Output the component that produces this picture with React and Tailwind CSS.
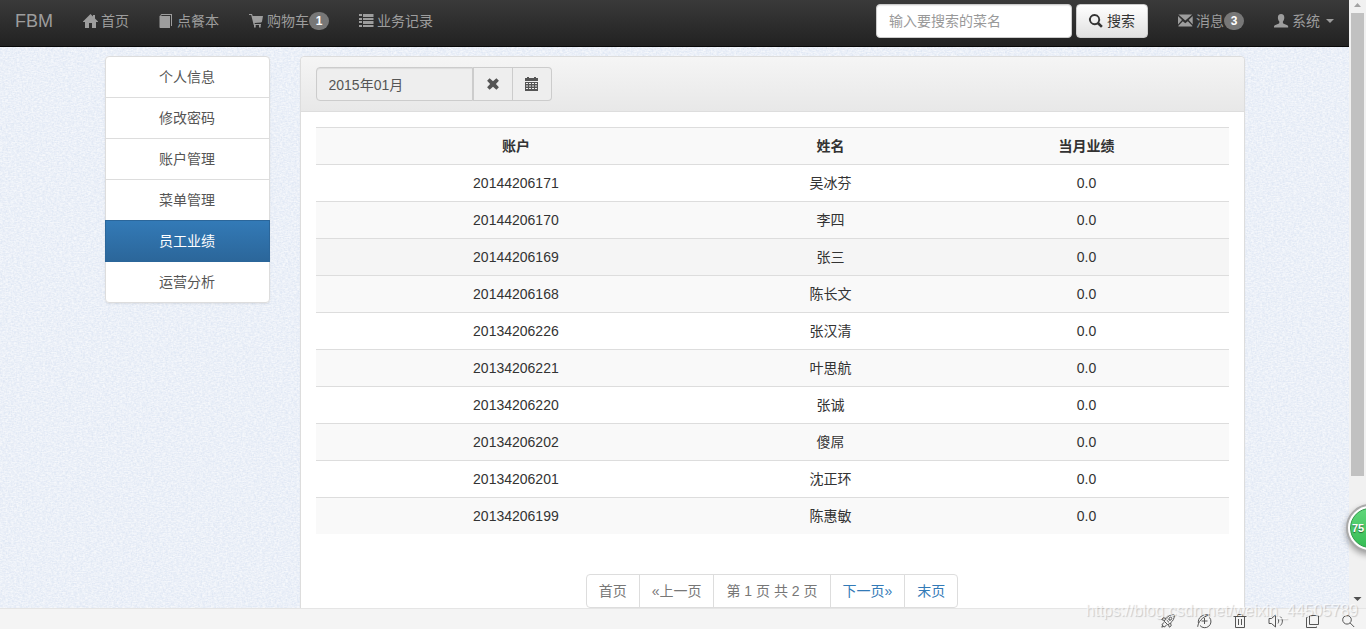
import React from 'react';

function Glyph({ children }) {
  return (
    <svg viewBox="0 0 14 14" aria-hidden="true" className="h-3.5 w-3.5 shrink-0 overflow-visible fill-current">
      {children}
    </svg>
  );
}

const HomeIcon = () => (
  <Glyph>
    <path d="M7.5 0 10 2.5V1h2v3.5l3 3V8h-2v6H9V9H6v5H2V8H0v-.5Z" />
  </Glyph>
);

const BookIcon = () => (
  <Glyph>
    <path d="M1 2h10v12H1.2a.7.7 0 0 1-.7-.7V2.400Z" />
    <path d="M.7 1.700 2.400 0H13v12h-1V1H3L2 1.800Z" />
  </Glyph>
);

const CartIcon = () => (
  <Glyph>
    <path d="M0 0h3l.7 2H14l-1 5.500c-.1.500-.4.800-.9.900L5.500 9l.4 1H12v1H4.700L2.200 1H0Z" />
    <path d="M5 11h1.700v2.400H5ZM10 11h1.700v2.400H10Z" />
  </Glyph>
);

const ListIcon = () => (
  <Glyph>
    <path d="M0 0h3v2H0ZM0 4h3v2H0ZM0 7h3v2H0ZM0 11h3v2H0ZM4 0h10.500v3H4ZM4 4h10.500v2H4ZM4 7h10.500v3H4ZM4 11h10.500v2H4Z" />
  </Glyph>
);

const SearchIcon = () => (
  <Glyph>
    <path
      fillRule="evenodd"
      d="M5.600 0a5.600 5.600 0 0 1 4.700 8.600l3.500 3.400-1.800 1.800-3.500-3.400A5.600 5.600 0 1 1 5.600 0Zm0 1.900a3.700 3.700 0 1 0 0 7.400 3.700 3.700 0 0 0 0-7.400Z"
    />
  </Glyph>
);

const EnvelopeIcon = () => (
  <Glyph>
    <path d="M.4.500h13.800L7.300 6.400ZM0 2l4 4-4 4.600ZM14.700 2v8.600l-4-4.600ZM4.800 7.200l2.500 2.100 2.500-2.100 4.500 4.600v.7H.4v-.7Z" />
  </Glyph>
);

const UserIcon = () => (
  <Glyph>
    <path d="M7.100 0c2.200 0 3.200 1.500 3.200 3.400 0 1.600-.5 3.100-1.400 4.100v1.200c0 .5.3.8.8 1l3.100 1.200c.9.4 1.400 1 1.400 1.900v.6H0v-.6c0-.9.5-1.500 1.400-1.900l3.100-1.200c.5-.2.8-.5.800-1V7.500c-.9-1-1.400-2.500-1.400-4.100C3.900 1.500 4.900 0 7.100 0Z" />
  </Glyph>
);

const RemoveIcon = () => (
  <Glyph>
    <path d="M3.600 1.200 7 4.200l3.400-3 2.500 2.500L9.900 7l3 3.300-2.500 2.500L7 9.800l-3.400 3-2.500-2.500L4.100 7l-3-3.300Z" />
  </Glyph>
);

const CalendarIcon = () => (
  <Glyph>
    <path d="M0 1h2V0h2v1h5V0h2v1h2v3H0Z" />
    <path
      fillRule="evenodd"
      d="M0 5h13v9H0ZM1 6v1h2V6Zm3 0v1h2V6Zm3 0v1h2V6Zm3 0v1h2V6ZM1 8.500v1h2v-1Zm3 0v1h2v-1Zm3 0v1h2v-1Zm3 0v1h2v-1ZM1 11v1h2v-1Zm3 0v1h2v-1Zm3 0v1h2v-1Zm3 0v1h2v-1Z"
    />
  </Glyph>
);

function Linen() {
  return (
    <svg aria-hidden="true" className="absolute inset-0 h-full w-full">
      <defs>
        <filter id="weft" x="0" y="0" width="100%" height="100%" colorInterpolationFilters="sRGB">
          <feTurbulence type="fractalNoise" baseFrequency="0.35 0.8" numOctaves="2" seed="4" />
          <feColorMatrix values="0 0 0 0 1  0 0 0 0 1  0 0 0 0 1  2.4 0 0 0 -0.85" />
        </filter>
        <filter id="warp" x="0" y="0" width="100%" height="100%" colorInterpolationFilters="sRGB">
          <feTurbulence type="fractalNoise" baseFrequency="0.8 0.35" numOctaves="2" seed="9" />
          <feColorMatrix values="0 0 0 0 0.85  0 0 0 0 0.89  0 0 0 0 0.95  2.4 0 0 0 -0.85" />
        </filter>
      </defs>
      <rect width="100%" height="100%" fill="#e9eef7" />
      <rect width="100%" height="100%" filter="url(#warp)" opacity="0.6" />
      <rect width="100%" height="100%" filter="url(#weft)" opacity="0.6" />
    </svg>
  );
}

function NavLink({ icon, label, badge, caret }) {
  return (
    <a href="#" className="flex items-center px-[15px] text-[#9d9d9d]">
      {icon}
      <span className="ml-1">{label}</span>
      {badge && (
        <span className="w-5 rounded-full bg-[#777] py-[3px] text-center text-xs leading-3 font-bold text-white">
          {badge}
        </span>
      )}
      {caret && (
        <svg viewBox="0 0 8 4" aria-hidden="true" className="ml-1.5 h-1 w-2 fill-current">
          <path d="M0 0h8L4 4Z" />
        </svg>
      )}
    </a>
  );
}

function Navbar() {
  return (
    <nav className="relative flex h-[47px] shrink-0 border-b border-[#080808] bg-linear-to-b from-[#3a3a3a] to-[#222] pb-1">
      <a href="#" className="flex items-center px-[15px] text-lg leading-5 text-[#9d9d9d]">FBM</a>
      <NavLink icon={<HomeIcon />} label="首页" />
      <NavLink icon={<BookIcon />} label="点餐本" />
      <NavLink icon={<CartIcon />} label="购物车" badge="1" />
      <NavLink icon={<ListIcon />} label="业务记录" />
      <form className="mr-[15px] ml-auto flex items-center gap-1" onSubmit={(e) => e.preventDefault()}>
        <input
          type="text"
          aria-label="菜名"
          placeholder="输入要搜索的菜名"
          className="h-[34px] w-[196px] rounded border border-[#ccc] bg-white px-3 shadow-[inset_0_1px_1px_rgba(0,0,0,0.08)] placeholder:text-[#999]"
        />
        <button
          type="submit"
          className="flex h-[34px] items-center gap-1 rounded border border-[#ccc] bg-linear-to-b from-white to-[#e0e0e0] px-3 text-[#333]"
        >
          <SearchIcon />
          搜索
        </button>
      </form>
      <NavLink icon={<EnvelopeIcon />} label="消息" badge="3" />
      <NavLink icon={<UserIcon />} label="系统" caret />
    </nav>
  );
}

const MENU = ['个人信息', '修改密码', '账户管理', '菜单管理', '员工业绩', '运营分析'];

function SideMenu() {
  return (
    <ul className="rounded shadow-[0_1px_2px_rgba(0,0,0,0.075)]">
      {MENU.map((item) => (
        <li key={item} className="group -mb-px">
          <a
            href="#"
            className={
              item === '员工业绩'
                ? 'relative block border border-[#2b669a] bg-linear-to-b from-[#337ab7] to-[#2b669a] py-2.5 text-center text-white'
                : 'block border border-[#ddd] bg-white py-2.5 text-center text-[#555] group-first:rounded-t group-last:rounded-b'
            }
          >
            {item}
          </a>
        </li>
      ))}
    </ul>
  );
}

const ROWS = [
  ['20144206171', '吴冰芬'],
  ['20144206170', '李四'],
  ['20144206169', '张三'],
  ['20144206168', '陈长文'],
  ['20134206226', '张汉清'],
  ['20134206221', '叶思航'],
  ['20134206220', '张诚'],
  ['20134206202', '傻屌'],
  ['20134206201', '沈正环'],
  ['20134206199', '陈惠敏'],
];

function rowColor(account, index) {
  if (account === '20144206169') return 'bg-[#f5f5f5]';
  return index % 2 ? 'bg-[#f9f9f9]' : 'bg-white';
}

function ResultsTable() {
  return (
    <table className="w-full table-fixed border-collapse text-center text-[#333]">
      <colgroup>
        <col className="w-[43.9%]" />
        <col className="w-[25%]" />
        <col />
      </colgroup>
      <thead>
        <tr className="border-t border-[#ddd] bg-[#f9f9f9]">
          <th className="p-2 font-bold">账户</th>
          <th className="p-2 font-bold">姓名</th>
          <th className="p-2 font-bold">当月业绩</th>
        </tr>
      </thead>
      <tbody>
        {ROWS.map(([account, name], i) => (
          <tr key={account} className={`border-t border-[#ddd] ${rowColor(account, i)}`}>
            <td className="p-2">{account}</td>
            <td className="p-2">{name}</td>
            <td className="p-2">0.0</td>
          </tr>
        ))}
      </tbody>
    </table>
  );
}

const PAGES = [
  { label: '首页', off: true },
  { label: '«上一页', off: true },
  { label: '第 1 页 共 2 页', off: true },
  { label: '下一页»' },
  { label: '末页' },
];

function Pagination() {
  return (
    <ul className="mt-10 flex justify-center">
      {PAGES.map(({ label, off }) => (
        <li key={label} className="group -ml-px first:ml-0">
          <a
            href="#"
            className={`block border border-[#ddd] bg-white px-3 py-1.5 whitespace-nowrap group-first:rounded-l group-last:rounded-r ${
              off ? 'text-[#777]' : 'text-[#337ab7]'
            }`}
          >
            {label}
          </a>
        </li>
      ))}
    </ul>
  );
}

function Panel() {
  return (
    <section className="rounded border border-[#ddd] bg-white pb-10 shadow-[0_1px_2px_rgba(0,0,0,0.05)]">
      <div className="flex rounded-t border-b border-[#ddd] bg-linear-to-b from-[#f5f5f5] to-[#e8e8e8] px-[15px] py-2.5">
        <input
          type="text"
          readOnly
          aria-label="月份"
          defaultValue="2015年01月"
          className="h-[34px] w-[157px] rounded-l border border-[#ccc] bg-[#eee] px-3 text-[#555] shadow-[inset_0_1px_1px_rgba(0,0,0,0.075)]"
        />
        <button type="button" aria-label="清除" className="flex w-10 items-center justify-center border border-[#ccc] bg-[#eee] text-[#555]">
          <RemoveIcon />
        </button>
        <button
          type="button"
          aria-label="选择月份"
          className="flex w-[39px] items-center justify-center rounded-r border border-l-0 border-[#ccc] bg-[#eee] text-[#555]"
        >
          <CalendarIcon />
        </button>
      </div>
      <div className="p-[15px]">
        <ResultsTable />
        <Pagination />
      </div>
    </section>
  );
}

function ScrollTrack() {
  return (
    <div aria-hidden="true" className="flex w-[17px] shrink-0 flex-col items-center bg-[#f1f1f1]">
      <svg viewBox="0 0 17 13" className="h-[13px] w-[17px]">
        <path d="M5 7h7L8.500 3Z" fill="#a3a3a3" />
      </svg>
      <div className="w-[13px] flex-[463] bg-[#c1c1c1]" />
      <div className="flex-[115]" />
      <svg viewBox="0 0 17 17" className="h-[17px] w-[17px]">
        <path d="M4.500 6h8L8.500 10Z" fill="#505050" />
      </svg>
    </div>
  );
}

function ToolIcon({ label, children }) {
  return (
    <button type="button" aria-label={label} className="flex h-5 w-9 items-center justify-center">
      <svg viewBox="0 0 14 14" className="h-3.5 w-3.5 overflow-visible fill-none stroke-[#555] stroke-1">
        {children}
      </svg>
    </button>
  );
}

function StatusBar() {
  return (
    <footer className="relative flex h-[21px] shrink-0 items-center justify-end border-t border-[#e5e5e5] bg-[#f4f4f4] pt-1">
      <ToolIcon label="加速">
        <path d="M13.300.700C9.600.500 7.300 1.800 4.800 4.700L3.200 7.200l3.600 3.600 2.500-1.600C12.200 6.700 13.500 4.400 13.300.700ZM5 4.400 2.200 3.800.800 5.600l2.600 1M9.600 9l.6 2.800-1.800 1.400-1-2.600M3.400 8.200.800 10.600l1 .4-1 2.200 2.200-1 .4 1 2.400-2.600M5.600 6l2.400 2.400M7 4.600 9.400 7" />
        <circle cx="9.500" cy="4.500" r="1.300" />
      </ToolIcon>
      <ToolIcon label="下载">
        <path d="M12.500 3.500A6 6 0 1 1 3 11.500M.700 12.800C1.200 8 4.800 3 12.500.900 5.500-.3.500 3.500 1.400 9.200M7.500 4v6M4.500 7h6" />
      </ToolIcon>
      <ToolIcon label="清理">
        <path d="M.500 2.500h13M4.500 2.500v-2h5v2M2.500 2.500v11h9v-11M5.500 5v6M8.500 5v6" />
      </ToolIcon>
      <ToolIcon label="声音">
        <path d="M0 4.500h2.500L6.500 1v12L2.500 9.500H0ZM9 4.800c.9 1.300.9 3.300 0 4.600M11.200 2.600c2.900 2.300 2.900 6.700 0 9" />
      </ToolIcon>
      <ToolIcon label="窗口">
        <path d="M4.500 1.500h9v9h-9ZM2.500 3.500h-1v10h10v-1" />
      </ToolIcon>
      <ToolIcon label="查找">
        <circle cx="6" cy="5.800" r="4.300" />
        <path d="m9.200 9 4 4" />
      </ToolIcon>
      <span className="pointer-events-none absolute right-2 -top-2 text-base leading-5 whitespace-nowrap text-white/70 [text-shadow:1px_1px_1px_rgba(0,0,0,0.18)]">
        https://blog.csdn.net/weixin_44505789
      </span>
    </footer>
  );
}

export default function App() {
  return (
    <div className="relative flex h-screen flex-col overflow-hidden font-['Liberation_Sans','Noto_Sans_CJK_SC',sans-serif] text-sm leading-5">
      <div className="flex min-h-0 flex-1">
        <div className="relative flex min-w-0 flex-1 flex-col overflow-hidden">
          <Linen />
          <Navbar />
          <main className="relative mx-auto mt-[9px] flex w-full max-w-[1170px] items-start">
            <aside className="w-1/6 px-[15px]">
              <SideMenu />
            </aside>
            <div className="w-5/6 px-[15px]">
              <Panel />
            </div>
          </main>
        </div>
        <ScrollTrack />
      </div>
      <div className="absolute -right-7 bottom-[77px] flex h-12 w-12 items-center rounded-full border-2 border-[#aaa] bg-white p-0.5 shadow-[0_3px_6px_rgba(0,0,0,0.35)]">
        <div className="flex h-full w-full items-center rounded-full border border-[#2f9a4a] bg-linear-to-b from-[#5fd67a] to-[#35bd55] text-[11px] font-bold text-white [text-shadow:0_1px_1px_rgba(0,0,0,0.5)]">
          <span className="pl-px">75</span>
        </div>
      </div>
      <StatusBar />
    </div>
  );
}
